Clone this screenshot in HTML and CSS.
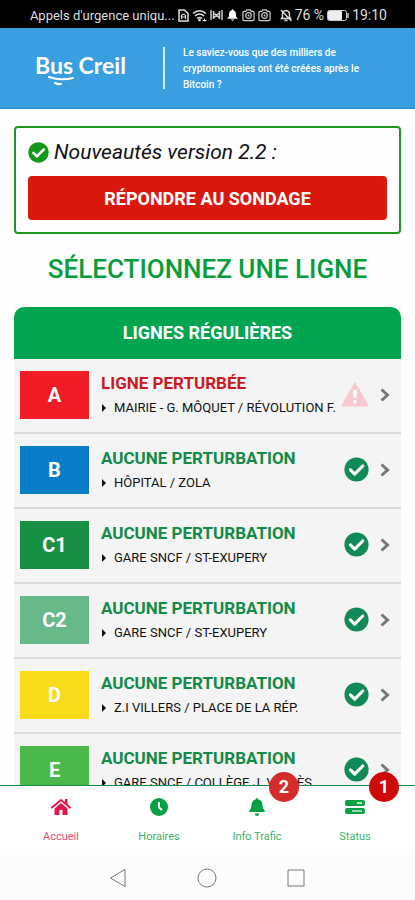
FILE: index.html
```html
<!DOCTYPE html>
<html lang="fr">

<head>
    <meta charset="UTF-8">
    <meta name="viewport" content="width=device-width, initial-scale=1.0">
    <title>Bus Creil</title>
    <link rel="stylesheet" href="styles.css">
</head>

<body>

    <!-- Icônes réutilisées dans les lignes -->
    <svg class="sprite" aria-hidden="true">
        <symbol id="check" viewBox="0 0 512 512">
            <path fill="currentColor" d="M504 256c0 137-111 248-248 248S8 393 8 256 119 8 256 8s248 111 248 248z" />
            <path fill="none" stroke="#fff" stroke-width="64" stroke-linecap="round" stroke-linejoin="round" d="M132 264l86 86 166-166" />
        </symbol>
        <symbol id="chevron" viewBox="0 0 10 14">
            <path fill="none" stroke="#777" stroke-width="3" d="M1.500 1.500L7.500 7L1.500 12.500" />
        </symbol>
        <symbol id="warning" viewBox="0 0 28 25">
            <path fill="#f9c9d0" stroke="#f9c9d0" stroke-width="2" stroke-linejoin="round" d="M14 1.500L26.500 23.500H1.500z" />
            <path fill="none" stroke="#fff" stroke-width="3.500" d="M14 8v8M14 18v3.500" />
        </symbol>
        <symbol id="camera" viewBox="0 0 14 14">
            <path fill="none" stroke="#ccc" stroke-width="1.300" d="M4 2.500L5 1h4l1 1.500h1.500q1.500 0 1.500 1.500v7q0 1.500-1.500 1.500h-9Q1 12.500 1 11V4q0-1.500 1.500-1.500z" />
            <circle cx="7" cy="7" r="3" fill="none" stroke="#ccc" stroke-width="1.300" />
            <circle cx="7" cy="7" r="1" fill="#ccc" />
        </symbol>
    </svg>

    <div class="barre-etat">
        <span class="operateur">Appels d'urgence uniqu...</span>
        <svg width="11" height="13" viewBox="0 0 11 13">
            <path fill="none" stroke="#ddd" stroke-width="1.500" d="M1 1h5.500L10 4.500V12H1z" />
            <path fill="none" stroke="#ddd" stroke-width="1.200" d="M3.500 10V6.500q2-2.500 4 0V10M3.500 8h4" />
        </svg>
        <svg width="15" height="13" viewBox="0 0 15 13">
            <path fill="none" stroke="#ddd" stroke-width="1.600" d="M1 4.500Q7.500-1 14 4.500M3 7q4.500-4 9 0M5 9.500q2.500-2 5 0" />
            <circle cx="7.500" cy="11" r="1.400" fill="#ddd" />
            <path stroke="#ddd" d="M10.500 11.500h4M12.500 9.500v3" />
        </svg>
        <svg width="13" height="12" viewBox="0 0 13 12">
            <path fill="none" stroke="#ccc" stroke-width="1.500" d="M1 1v10M12 1v10M3.500 2v8M9.500 2v8M3.500 4l3 2 3-2M3.500 9l3-3 3 3" />
        </svg>
        <svg class="cloche" width="11" height="12" viewBox="0 0 11 12">
            <path fill="#fff" d="M5.500 0l1 1.200Q9 2 9 5v2.500L10.500 9v.8H.5V9L2 7.500V5q0-3 2.500-3.800zM4 10.500h3q-.4 1.300-1.500 1.300T4 10.500z" />
        </svg>
        <svg width="13" height="13"><use href="#camera" /></svg>
        <svg width="13" height="13"><use href="#camera" /></svg>
        <svg class="muet" width="12" height="13" viewBox="0 0 12 13">
            <path fill="none" stroke="#ddd" stroke-width="1.400" d="M6 1.500q-3.500.5-3.500 4V8L1.500 9.500h9L9.500 8V5.500q0-3.500-3.500-4M4.500 11.500h3M1 1l10.500 11" />
        </svg>
        <span>76 %</span>
        <svg width="22" height="11" viewBox="0 0 22 11">
            <rect x=".5" y=".5" width="19" height="10" rx="2" fill="none" stroke="#ccc" />
            <rect x="1" y="1" width="14" height="9" rx="1" fill="#eee" />
            <path stroke="#ccc" stroke-width="1.500" d="M21 3v5" />
        </svg>
        <span>19:10</span>
    </div>

    <header>
        <div class="logo">
            <span>Bus Creil</span>
            <svg width="27" height="10" viewBox="0 0 27 10">
                <path fill="none" stroke="#fff" stroke-width="2" stroke-linecap="round" d="M1 1q11 4 24 1M7 7q3 1.500 6 1" />
            </svg>
        </div>
        <p>Le saviez-vous que des milliers de cryptomonnaies ont été créées après le Bitcoin ?</p>
    </header>

    <main>
        <section class="nouveautes">
            <h2><svg width="21" height="21"><use href="#check" /></svg>Nouveautés version 2.2 :</h2>
            <button type="button">RÉPONDRE AU SONDAGE</button>
        </section>

        <h1>SÉLECTIONNEZ UNE LIGNE</h1>

        <section class="lignes">
            <h2>LIGNES RÉGULIÈRES</h2>

            <a class="ligne perturbee" href="#a">
                <span class="numero rouge">A</span>
                <span class="infos"><strong>LIGNE PERTURBÉE</strong><small>MAIRIE - G. MÔQUET / RÉVOLUTION F.</small></span>
                <svg class="etat" width="28" height="25"><use href="#warning" /></svg>
                <svg width="10" height="14"><use href="#chevron" /></svg>
            </a>
            <a class="ligne" href="#b">
                <span class="numero bleu">B</span>
                <span class="infos"><strong>AUCUNE PERTURBATION</strong><small>HÔPITAL / ZOLA</small></span>
                <svg class="etat" width="25" height="25"><use href="#check" /></svg>
                <svg width="10" height="14"><use href="#chevron" /></svg>
            </a>
            <a class="ligne" href="#c1">
                <span class="numero vert">C1</span>
                <span class="infos"><strong>AUCUNE PERTURBATION</strong><small>GARE SNCF / ST-EXUPERY</small></span>
                <svg class="etat" width="25" height="25"><use href="#check" /></svg>
                <svg width="10" height="14"><use href="#chevron" /></svg>
            </a>
            <a class="ligne" href="#c2">
                <span class="numero menthe">C2</span>
                <span class="infos"><strong>AUCUNE PERTURBATION</strong><small>GARE SNCF / ST-EXUPERY</small></span>
                <svg class="etat" width="25" height="25"><use href="#check" /></svg>
                <svg width="10" height="14"><use href="#chevron" /></svg>
            </a>
            <a class="ligne" href="#d">
                <span class="numero jaune">D</span>
                <span class="infos"><strong>AUCUNE PERTURBATION</strong><small>Z.I VILLERS / PLACE DE LA RÉP.</small></span>
                <svg class="etat" width="25" height="25"><use href="#check" /></svg>
                <svg width="10" height="14"><use href="#chevron" /></svg>
            </a>
            <a class="ligne" href="#e">
                <span class="numero pomme">E</span>
                <span class="infos"><strong>AUCUNE PERTURBATION</strong><small>GARE SNCF / COLLÈGE J. VALLÈS</small></span>
                <svg class="etat" width="25" height="25"><use href="#check" /></svg>
                <svg width="10" height="14"><use href="#chevron" /></svg>
            </a>
        </section>
    </main>

    <nav>
        <a class="actif" href="#accueil">
            <svg width="20" height="18" viewBox="0 0 20 18">
                <path fill="none" stroke="currentColor" stroke-width="2" stroke-linecap="round" stroke-linejoin="round" d="M1 9.500L10 2l9 7.500" />
                <path fill="currentColor" d="M14 1h2.500v6L14 5zM10 5l6.500 5.500V17h-5v-5h-3v5h-5v-6.500z" />
            </svg>
            <span>Accueil</span>
        </a>
        <a href="#horaires">
            <svg width="18" height="18" viewBox="0 0 18 18">
                <circle cx="9" cy="9" r="9" fill="currentColor" />
                <path fill="none" stroke="#fff" stroke-width="2" d="M9 4v5.500l3 2.500" />
            </svg>
            <span>Horaires</span>
        </a>
        <a href="#trafic">
            <svg width="16" height="18" viewBox="0 0 16 18">
                <path fill="currentColor" d="M8 0q1 0 1 1.200Q13.500 2.300 13.500 7q0 4 2 5.500.5.500.5 1.500H0q0-1 .5-1.500 2-1.500 2-5.500Q2.500 2.300 7 1.200 7 0 8 0zM5.700 15.500h4.600Q10 18 8 18t-2.300-2.500z" />
            </svg>
            <span>Info Trafic</span>
            <b class="badge clair">2</b>
        </a>
        <a href="#status">
            <svg width="20" height="18" viewBox="0 0 20 18">
                <rect y="2" width="20" height="6" rx="2" fill="currentColor" />
                <rect y="10" width="20" height="6" rx="2" fill="currentColor" />
                <path stroke="#fff" stroke-width="1.500" d="M12 5h5" />
                <path stroke="#9bd8b5" stroke-width="2" d="M7 13h10" />
            </svg>
            <span>Status</span>
            <b class="badge">1</b>
        </a>
    </nav>

    <div class="barre-systeme">
        <svg width="18" height="20" viewBox="0 0 18 20"><path d="M16 1.500v17L1.500 10z" /></svg>
        <svg width="20" height="20" viewBox="0 0 20 20"><circle cx="10" cy="10" r="9" /></svg>
        <svg width="18" height="18" viewBox="0 0 18 18"><path d="M1 1h16v16H1z" /></svg>
    </div>

</body>

</html>
```
FILE: styles.css
```css
* {
    box-sizing: border-box;
}

body {
    margin: 0;
    height: 100vh;
    display: flex;
    flex-direction: column;
    background-color: #fefefe;
    font-family: Roboto, Arial, sans-serif;
}

svg {
    flex-shrink: 0;
}

a {
    text-decoration: none;
}

.sprite {
    position: absolute;
    width: 0;
    height: 0;
}

/* Barre d'état du téléphone */
.barre-etat {
    flex-shrink: 0;
    height: 28px;
    padding: 2px 28px 0 30px;
    display: flex;
    align-items: center;
    justify-content: flex-end;
    gap: 3px;
    background-color: #000;
    color: #ddd;
    font-size: 14px;
    white-space: nowrap;
}

.operateur {
    margin-right: auto;
    font-size: 13px;
}

.cloche {
    margin: 0 1px;
}

.muet {
    margin-left: 6px;
}

header {
    flex-shrink: 0;
    height: 81px;
    padding: 0 30px 0 35px;
    display: flex;
    align-items: center;
    background-color: #399fe0;
    border-bottom: 1px solid #1f92d4;
    color: #fff;
}

.logo {
    width: 130px;
    height: 42px;
    border-right: 2px solid #d8edfa;
    font-family: Lato, sans-serif;
    font-size: 23px;
    font-weight: bold;
    line-height: 36px;
    position: relative;
}

.logo svg {
    position: absolute;
    left: 13px;
    top: 29px;
}

header p {
    flex: 1;
    margin: 2px 0 0 18px;
    font-size: 10px;
    font-weight: 500;
    line-height: 16px;
}

main {
    flex: 1;
    min-height: 0;
    padding: 17px 14px 0;
    overflow-y: auto;
    scrollbar-width: none;
}

.nouveautes {
    height: 108px;
    padding: 12px;
    border: 2px solid #1c9a20;
    border-radius: 4px;
}

.nouveautes h2 {
    margin: 0 0 12px;
    display: flex;
    align-items: center;
    gap: 5px;
    color: #111;
    font-size: 21px;
    font-style: italic;
    font-weight: 400;
    line-height: 24px;
}

.nouveautes h2 svg {
    color: #12991a;
}

.nouveautes button {
    width: 100%;
    height: 44px;
    padding: 0;
    background-color: #da190d;
    color: #fff;
    border: none;
    border-radius: 4px;
    font-family: inherit;
    font-size: 18px;
    font-weight: bold;
    cursor: pointer;
}

h1 {
    margin: 18px 0 20px;
    color: #089c3a;
    font-size: 26px;
    font-weight: 500;
    line-height: 35px;
    text-align: center;
}

.lignes {
    border-radius: 10px 10px 0 0;
    overflow: hidden;
    background-color: #f4f4f4;
}

.lignes h2 {
    margin: 0;
    background-color: #04a550;
    color: #fff;
    font-size: 18px;
    font-weight: bold;
    line-height: 52px;
    text-align: center;
}

.ligne {
    height: 75px;
    padding: 0 11px 2px 6px;
    display: flex;
    align-items: center;
    border-bottom: 2px solid #dadada;
    color: #128a48;
}

.perturbee {
    color: #cc1a22;
}

.numero {
    width: 69px;
    height: 48px;
    color: #fff;
    font-size: 20px;
    font-weight: bold;
    line-height: 48px;
    text-align: center;
}

.rouge {
    background-color: #f01b24;
}

.bleu {
    background-color: #0a7dc8;
}

.vert {
    background-color: #189044;
}

.menthe {
    background-color: #67b98a;
}

.jaune {
    background-color: #f8dc1c;
}

.pomme {
    background-color: #4ab94a;
}

.infos {
    flex: 1;
    min-width: 0;
    margin-left: 12px;
    padding-top: 3px;
    white-space: nowrap;
}

.infos strong {
    display: block;
    font-size: 17px;
    font-weight: bold;
    line-height: 24px;
}

.infos small {
    display: flex;
    align-items: center;
    color: #111;
    font-size: 13px;
    line-height: 26px;
}

.infos small::before {
    content: "";
    margin: 0 8px 0 1px;
    border: 4px solid transparent;
    border-left-color: #111;
    border-right: 0;
}

.etat {
    margin-right: 11px;
    color: #128a55;
}

/* Menu du bas */
nav {
    flex-shrink: 0;
    height: 70px;
    padding: 0 11px 0 12px;
    display: flex;
    border-top: 1px solid #128a48;
    background-color: #fff;
    position: relative;
}

nav a {
    flex: 1;
    padding-top: 12px;
    display: flex;
    flex-direction: column;
    align-items: center;
    gap: 13px;
    color: #08a045;
    font-size: 11px;
    line-height: 16px;
    position: relative;
}

nav .actif {
    color: #e0194f;
}

nav span {
    opacity: 0.8;
}

.badge {
    position: absolute;
    top: -14px;
    left: calc(50% + 14px);
    width: 30px;
    height: 30px;
    border-radius: 50%;
    background-color: #cc0a0a;
    color: #fff;
    font-size: 18px;
    line-height: 29px;
    text-align: center;
}

.clair {
    left: calc(50% + 12px);
    background-color: #d42b2b;
}

.barre-systeme {
    flex-shrink: 0;
    height: 45px;
    padding-right: 1px;
    display: flex;
    align-items: center;
    justify-content: center;
    gap: 70px;
    background-color: #fcfcfc;
}

.barre-systeme svg {
    fill: none;
    stroke: #777;
    stroke-width: 1px;
}
```
